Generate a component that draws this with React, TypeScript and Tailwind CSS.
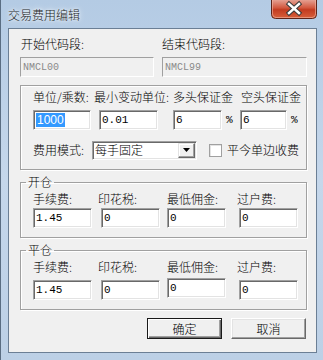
import React from "react"

const cjk = "font-['Noto_Sans_CJK_SC','Noto_Sans',sans-serif] font-light"
const mono = "font-['Liberation_Mono',monospace] font-normal"

const sunken =
  "h-[20px] border border-t-[#a0a0a0] border-l-[#a0a0a0] border-b-white border-r-white shadow-[inset_1px_1px_0_#696969,inset_-1px_-1px_0_#e3e3e3] flex items-center pl-[2px]"

function Field({ value, w, className = "" }: { value: string; w: string; className?: string }) {
  return (
    <div className={`${sunken} ${w} bg-white text-black ${mono} text-[11px] ${className}`}>
      {value}
    </div>
  )
}

function Label({ text, className = "" }: { text: string; className?: string }) {
  return <span className={`h-[14px] leading-[14px] whitespace-nowrap ${className}`}>{text}</span>
}

function Group({ title, children }: { title: string; children: React.ReactNode }) {
  return (
    <fieldset className="border border-[#a0a0a0] shadow-[inset_1px_1px_0_#fff,1px_1px_0_#fff] px-0">
      <legend className="ml-[5px] px-[2px] leading-[12px] h-[12px]">{title}</legend>
      {children}
    </fieldset>
  )
}

function FeeRow({ labels, values, bump = false }: { labels: string[]; values: string[]; bump?: boolean }) {
  return (
    <>
      <div className="flex pt-[4px] pl-[12px]">
        <Label text={labels[0]} className="w-[65px]" />
        <Label text={labels[1]} className="w-[69px]" />
        <Label text={labels[2]} className="w-[70px]" />
        <Label text={labels[3]} />
      </div>
      <div className={`flex items-start pl-[12px] ${bump ? "mt-[6px]" : "mt-[2px]"}`}>
        <Field value={values[0]} w="w-[59px]" />
        <Field value={values[1]} w="w-[59px]" className="ml-[9px]" />
        <Field value={values[2]} w="w-[59px]" className={bump ? "ml-[7px] -mt-[2px]" : "ml-[7px]"} />
        <Field value={values[3]} w="w-[59px]" className="ml-[13px]" />
      </div>
    </>
  )
}

function Button({ text, primary = false }: { text: string; primary?: boolean }) {
  return (
    <div
      className={`w-[75px] h-[21px] flex items-center justify-center bg-[#f0f0f0] ${
        primary
          ? "border border-[#1a1a1a] shadow-[inset_1px_1px_0_#fff,inset_-1px_-1px_0_#696969,inset_-2px_-2px_0_#a0a0a0]"
          : "border border-t-white border-l-white border-b-[#696969] border-r-[#696969] shadow-[inset_-1px_-1px_0_#a0a0a0,inset_1px_1px_0_#e3e3e3]"
      }`}
    >
      {text}
    </div>
  )
}

export default function App() {
  return (
    <div className={`w-[323px] h-[360px] overflow-hidden flex flex-col bg-gradient-to-b from-[#b4cbe4] via-[#c5d7eb] to-[#bcd0e6] border-l border-[#5a6d82] ${cjk} text-[12px] text-black`}>
      {/* title bar */}
      <div className="h-[28px] flex items-start justify-between shrink-0">
        <span className="mt-[8px] ml-[7px] leading-[14px] text-[12px] text-[#1e1e1e] [text-shadow:0_0_6px_#fff,0_0_3px_#fff]">
          交易费用编辑
        </span>
        <svg width="46" height="20" viewBox="0 0 46 20" className="mr-[6px] -mt-[1px]">
          <defs>
            <linearGradient id="cl" x1="0" y1="0" x2="0" y2="1">
              <stop offset="0" stopColor="#e7a89b" />
              <stop offset="0.45" stopColor="#d2583f" />
              <stop offset="0.55" stopColor="#c23b20" />
              <stop offset="1" stopColor="#d9613c" />
            </linearGradient>
          </defs>
          <path d="M0.5 0 V15.5 Q0.5 19.5 4.5 19.5 H41.5 Q45.5 19.5 45.5 15.5 V0" fill="url(#cl)" stroke="#5e2419" />
          <path d="M1.5 0 V15 Q1.5 18.5 5 18.5 H41 Q44.5 18.5 44.5 15 V0" fill="none" stroke="#f2b7a6" strokeOpacity="0.6" />
          <path d="M18 5 L28 14 M28 5 L18 14" stroke="#3b3b3b" strokeWidth="4.5" strokeLinecap="square" />
          <path d="M18 5 L28 14 M28 5 L18 14" stroke="#ffffff" strokeWidth="2.5" strokeLinecap="square" />
        </svg>
      </div>

      {/* client area */}
      <div className="ml-[7px] mr-[6px] h-[325px] shrink-0 border border-[#6b7f95] bg-[#f0f0f0] pl-[11px] pr-[9px] flex flex-col">
        <div className="flex mt-[7px]">
          <span className="w-[142px] h-[16px] leading-[16px] pl-[1px]">开始代码段:</span>
          <span className="h-[16px] leading-[16px]">结束代码段:</span>
        </div>
        <div className="flex mt-[5px]">
          <div className={`${sunken} w-[134px] bg-[#f0f0f0] text-[#8a8a8a] ${mono} text-[10px] shadow-none border-[#a0a0a0] border-b-[#e3e3e3] border-r-[#e3e3e3]`}>NMCL00</div>
          <div className={`${sunken} w-[145px] ml-[8px] bg-[#f0f0f0] text-[#8a8a8a] ${mono} text-[10px] shadow-none border-[#a0a0a0] border-b-[#e3e3e3] border-r-[#e3e3e3]`}>NMCL99</div>
        </div>

        {/* unit / margin group */}
        <div className="mt-[8px] border border-[#a0a0a0] shadow-[inset_1px_1px_0_#fff,1px_1px_0_#fff] pl-[12px] pt-[4px] pb-[10px]">
          <div className="flex">
            <Label text="单位/乘数:" className="w-[61px]" />
            <Label text="最小变动单位:" className="w-[79px]" />
            <Label text="多头保证金" className="w-[68px]" />
            <Label text="空头保证金" />
          </div>
          <div className="flex mt-[6px] items-center">
            <div className={`${sunken} w-[58px] bg-white`}>
              <span className="bg-[#3399ff] text-white font-['Liberation_Sans',sans-serif] font-normal text-[12px] leading-[14px] px-[1px]">1000</span>
            </div>
            <Field value="0.01" w="w-[59px]" className="ml-[8px]" />
            <Field value="6" w="w-[49px]" className="ml-[15px]" />
            <span className={`ml-[4px] w-[14px] ${mono} text-[11px]`}>%</span>
            <Field value="6" w="w-[47px]" className="ml-[0px]" />
            <span className={`ml-[4px] ${mono} text-[11px]`}>%</span>
          </div>
          <div className="flex mt-[11px] items-center h-[18px]">
            <span className="w-[59px]">费用模式:</span>
            <div className="w-[105px] h-[19px] border border-t-[#a0a0a0] border-l-[#a0a0a0] border-b-white border-r-white shadow-[inset_1px_1px_0_#696969,inset_-1px_-1px_0_#e3e3e3] bg-white flex items-center justify-between pl-[2px] pr-[1px]">
              <span className="leading-[14px] text-[12px]">每手固定</span>
              <div className="w-[17px] h-[15px] bg-[#f0f0f0] border border-t-[#e3e3e3] border-l-[#e3e3e3] border-b-[#696969] border-r-[#696969] shadow-[inset_-1px_-1px_0_#a0a0a0,inset_1px_1px_0_#fff] flex items-center justify-center">
                <svg width="7" height="4" viewBox="0 0 7 4">
                  <path d="M0 0 H7 L3.5 4 Z" fill="#000" />
                </svg>
              </div>
            </div>
            <div className="ml-[12px] w-[13px] h-[13px] bg-white border border-[#a0a0a0] shadow-[inset_1px_1px_0_#e3e3e3]" />
            <span className="ml-[5px] leading-[14px]">平今单边收费</span>
          </div>
        </div>

        <div className="mt-[6px]">
          <Group title="开仓">
            <div className="pb-[9px]">
              <FeeRow labels={["手续费:", "印花税:", "最低佣金:", "过户费:"]} values={["1.45", "0", "0", "0"]} />
            </div>
          </Group>
        </div>

        <div className="mt-[6px]">
          <Group title="平仓">
            <div className="pb-[9px]">
              <FeeRow labels={["手续费:", "印花税:", "最低佣金:", "过户费:"]} values={["1.45", "0", "0", "0"]} bump />
            </div>
          </Group>
        </div>

        <div className="flex justify-end gap-[9px] mt-[8px] pr-[1px]">
          <Button text="确定" primary />
          <Button text="取消" />
        </div>
      </div>
    </div>
  )
}
